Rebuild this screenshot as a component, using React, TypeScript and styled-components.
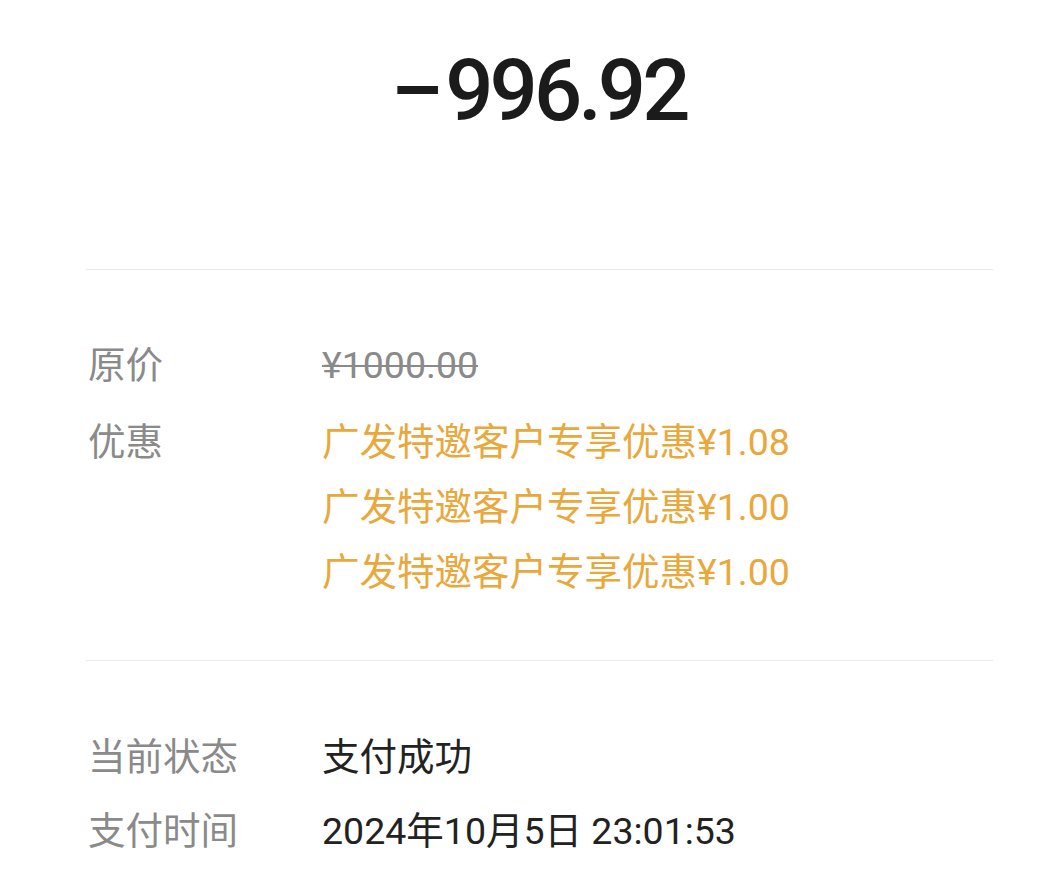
import React from 'react';
import styled, { createGlobalStyle } from 'styled-components';

const GlobalStyle = createGlobalStyle`
  html, body {
    margin: 0;
    padding: 0;
    background: #ffffff;
  }
  body {
    font-family: Roboto, "Noto Sans CJK SC", "Noto Sans", sans-serif;
    -webkit-font-smoothing: antialiased;
  }
`;

const Page = styled.div`
  width: 1061px;
  min-height: 869px;
  box-sizing: border-box;
  padding: 0 68px 0 86px;
  overflow: hidden;
`;

const Amount = styled.div`
  padding-top: 49px;
  height: 269px;
  box-sizing: border-box;
  text-align: center;
  font-family: Roboto, sans-serif;
  font-weight: 500;
  font-size: 85px;
  line-height: 1;
  color: #1b1b1b;
  letter-spacing: -4px;
`;

const Minus = styled.span`
  display: inline-block;
  margin-right: 9px;
  transform: scaleX(1.15);
`;

const Divider = styled.div`
  height: 1px;
  background: #ebebeb;
`;

const Section = styled.div<{ $top: number; $bottom: number; $gap: number }>`
  padding: ${(p) => p.$top}px 0 ${(p) => p.$bottom}px 2px;
  display: flex;
  flex-direction: column;
  gap: ${(p) => p.$gap}px;
`;

const Row = styled.div`
  display: grid;
  grid-template-columns: 234px 1fr;
  font-size: 37.5px;
  line-height: 65px;
`;

const Label = styled.div`
  color: #8a8a8a;
`;

const Values = styled.div`
  display: flex;
  flex-direction: column;
`;

const Value = styled.div<{ $tone?: 'dark' | 'orange' | 'struck' }>`
  color: ${(p) =>
    p.$tone === 'orange' ? '#e9a83b' : p.$tone === 'struck' ? '#8a8a8a' : '#222222'};
  text-decoration: ${(p) => (p.$tone === 'struck' ? 'line-through' : 'none')};
  text-decoration-thickness: 2px;
  white-space: nowrap;
`;

const discounts = ['¥1.08', '¥1.00', '¥1.00'];

export default function App() {
  return (
    <>
      <GlobalStyle />
      <Page>
        <Amount>
          <Minus>−</Minus>996.92
        </Amount>
        <Divider />
        <Section $top={63} $bottom={55} $gap={12}>
          <Row>
            <Label>原价</Label>
            <Value $tone="struck">¥1000.00</Value>
          </Row>
          <Row>
            <Label>优惠</Label>
            <Values>
              {discounts.map((d, i) => (
                <Value key={i} $tone="orange">
                  广发特邀客户专享优惠{d}
                </Value>
              ))}
            </Values>
          </Row>
        </Section>
        <Divider />
        <Section $top={64} $bottom={0} $gap={9}>
          <Row>
            <Label>当前状态</Label>
            <Value>支付成功</Value>
          </Row>
          <Row>
            <Label>支付时间</Label>
            <Value>2024年10月5日 23:01:53</Value>
          </Row>
        </Section>
      </Page>
    </>
  );
}
